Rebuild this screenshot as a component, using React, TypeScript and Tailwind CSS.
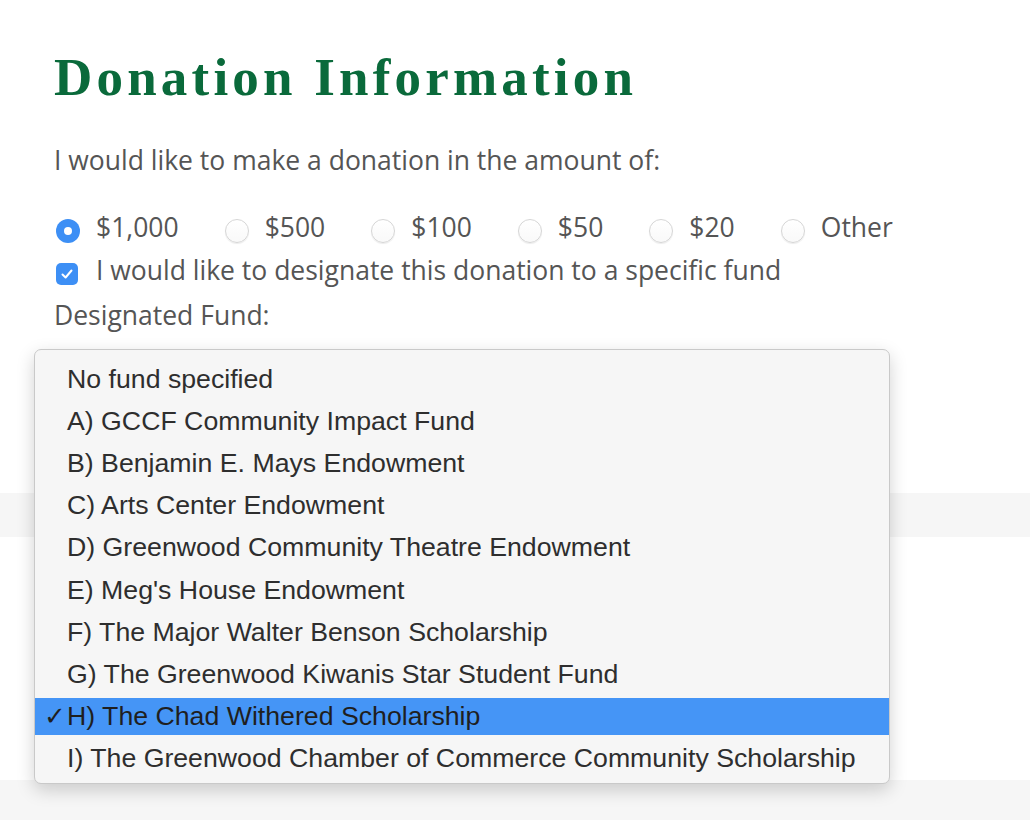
import { useState } from 'react';

const amounts = ['$1,000', '$500', '$100', '$50', '$20', 'Other'];

const funds = [
    'No fund specified',
    'A) GCCF Community Impact Fund',
    'B) Benjamin E. Mays Endowment',
    'C) Arts Center Endowment',
    'D) Greenwood Community Theatre Endowment',
    "E) Meg's House Endowment",
    'F) The Major Walter Benson Scholarship',
    'G) The Greenwood Kiwanis Star Student Fund',
    'H) The Chad Withered Scholarship',
    'I) The Greenwood Chamber of Commerce Community Scholarship',
];

const Radio = ({ checked }: { checked: boolean }) =>
    checked ? (
        <span className="mt-[8px] flex h-[24px] w-[24px] shrink-0 items-center justify-center rounded-full bg-[#3d8ff5]">
            <span className="h-[8px] w-[8px] rounded-full bg-white" />
        </span>
    ) : (
        <span className="mt-[8px] h-[24px] w-[24px] shrink-0 rounded-full border border-[#d6d6d6] bg-gradient-to-b from-white to-[#f9f9f9] shadow-[0_1px_1px_rgba(0,0,0,0.08)]" />
    );

export default function App() {
    const [amount, setAmount] = useState('$1,000');
    const [designate, setDesignate] = useState(true);
    const selectedFund = funds[8];

    return (
        <div className="relative flex h-[820px] w-[1030px] flex-col overflow-hidden bg-white font-['Open_Sans',sans-serif] text-[#555]">
            <div className="h-[493px] shrink-0 px-[54px]">
                <h1 className="mt-[51px] h-[53px] font-['Liberation_Serif',serif] text-[53px] font-bold leading-[53px] tracking-[4.2px] text-[#0a6a3b]">
                    Donation Information
                </h1>
                <p className="mt-[40px] h-[32px] text-[26.5px] leading-[32px]">
                    I would like to make a donation in the amount of:
                </p>
                <div className="mt-[35px] flex h-[32px] items-start gap-[46px] pl-[2px]">
                    {amounts.map((a) => (
                        <label key={a} className="flex items-start gap-[16px]" onClick={() => setAmount(a)}>
                            <Radio checked={amount === a} />
                            <span className="text-[26.5px] leading-[32px]">{a}</span>
                        </label>
                    ))}
                </div>
                <label className="mt-[11px] flex h-[32px] items-start gap-[18px] pl-[2px]" onClick={() => setDesignate(!designate)}>
                    <span className="mt-[9px] flex h-[22px] w-[22px] shrink-0 items-center justify-center rounded-[5px] bg-[#3d8ff5]">
                        {designate && (
                            <svg width="14" height="14" viewBox="0 0 14 14" fill="none">
                                <path d="M2.5 7.5 L5.6 10.5 L11.5 3.5" stroke="white" strokeWidth="2" strokeLinecap="round" strokeLinejoin="round" />
                            </svg>
                        )}
                    </span>
                    <span className="text-[26.5px] leading-[32px]">
                        I would like to designate this donation to a specific fund
                    </span>
                </label>
                <div className="mt-[13px] h-[32px] text-[26.5px] leading-[32px]">Designated Fund:</div>
            </div>
            <div className="h-[44px] shrink-0 bg-[#f6f6f6]" />
            <div className="h-[243px] shrink-0 bg-white" />
            <div className="flex-1 bg-[#f6f6f6]" />

            {/* open fund menu */}
            <div className="absolute left-[34px] top-[349px] w-[856px] rounded-[7px] border border-[#c9c9c9] bg-[#f6f6f6] pb-[3px] pt-[8px] shadow-[0_6px_18px_rgba(0,0,0,0.18)] font-['Liberation_Sans',Arial,sans-serif] text-[26.7px] text-[#2e2e2e]">
                {funds.map((f) => {
                    const sel = f === selectedFund;
                    return (
                        <div key={f} className="flex h-[42.2px] items-center">
                            <div className={`relative flex h-[37px] w-full items-center pl-[32px] ${sel ? 'bg-[#4595f6] text-[#1f1f1f]' : ''}`}>
                                {sel && (
                                    <span className="absolute left-[9px] font-['DejaVu_Sans',sans-serif] text-[26px] font-bold">✓</span>
                                )}
                                <span className="leading-none">{f}</span>
                            </div>
                        </div>
                    );
                })}
            </div>
        </div>
    );
}
